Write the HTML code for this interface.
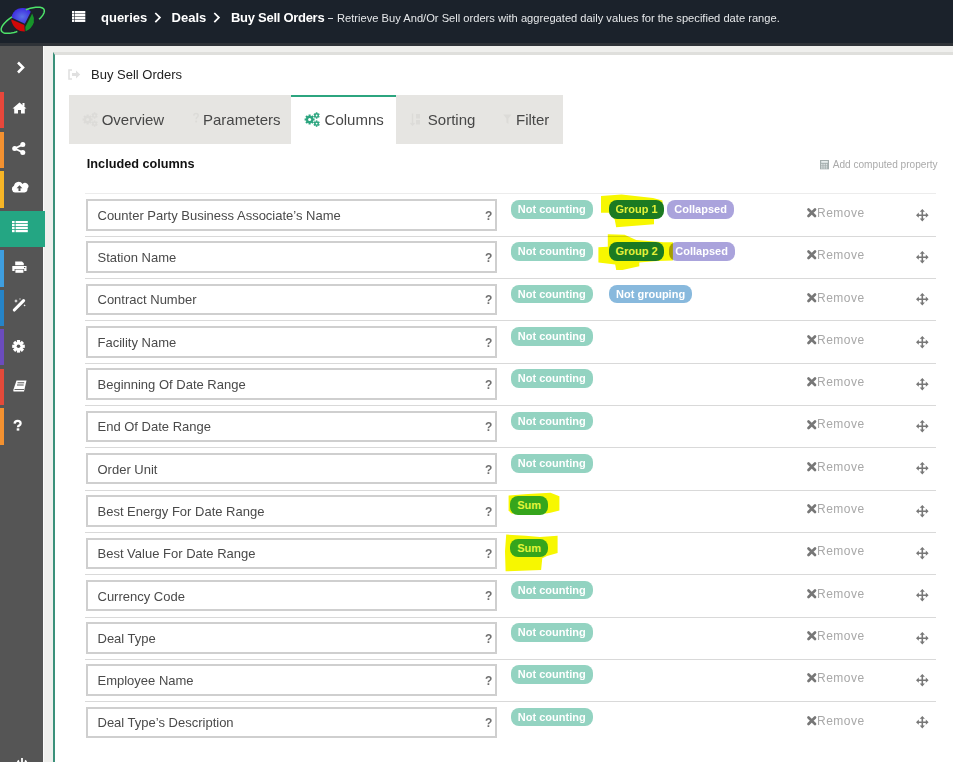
<!DOCTYPE html>
<html><head><meta charset="utf-8"><style>
html,body{margin:0;padding:0;}
body{width:953px;height:762px;overflow:hidden;position:relative;background:#efefed;font-family:"Liberation Sans", sans-serif;}
.t{position:absolute;white-space:pre;}
.r{position:absolute;}
svg{position:absolute;overflow:visible;}
</style></head><body>
<div class="r" style="left:0px;top:0px;width:953px;height:43px;background:#1b222b;"></div><div class="r" style="left:0px;top:43px;width:953px;height:3px;background:#2f3338;"></div><svg style="left:0px;top:0px" width="48" height="40" viewBox="0 0 48 40">
<defs><radialGradient id="gb" cx="0.55" cy="0.55" r="0.6"><stop offset="0" stop-color="#5b72e6"/><stop offset="1" stop-color="#3a22e0"/></radialGradient></defs>
<path d="M11.5,17.5 Q12.5,11.5 18,8.8 Q23,7 28,9 L30.8,11.8 L24.8,23.8 Z" fill="url(#gb)"/>
<path d="M11,19.2 L24.3,25 L24.8,31.6 Q20,31.8 16.5,29 Q12,25 11,19.2 Z" fill="#d00808"/>
<path d="M32.2,13.6 Q34.5,17.5 33.8,22.5 Q32,28.5 25.6,31.2 L25.3,27 Z" fill="#17952a"/>
<polyline points="17.35,31.54 15.72,32.03 14.13,32.44 12.59,32.78 11.12,33.04 9.72,33.22 8.40,33.32 7.18,33.34 6.05,33.28 5.02,33.14 4.10,32.91 3.30,32.61 2.62,32.23 2.07,31.77 1.64,31.24 1.35,30.65 1.19,29.99 1.17,29.27 1.28,28.49 1.52,27.66 1.90,26.78 2.40,25.87 3.04,24.92 3.79,23.94 4.67,22.93 5.66,21.91 6.75,20.88 7.94,19.85 9.23,18.82 10.60,17.80 12.05,16.79" fill="none" stroke="#4ee36a" stroke-width="1.5"/>
<polyline points="25.86,9.75 27.37,9.22 28.86,8.74 30.32,8.33 31.74,7.97 33.12,7.68 34.44,7.45 35.71,7.28 36.90,7.19 38.03,7.15 39.08,7.19 40.04,7.29 40.92,7.46 41.71,7.69 42.39,7.99 42.98,8.35 43.47,8.77 43.85,9.24 44.12,9.78 44.28,10.36 44.34,11.00 44.28,11.69 44.12,12.41 43.84,13.18 43.46,13.99 42.98,14.82 42.39,15.68 41.70,16.57 40.91,17.48 40.04,18.39 39.07,19.32" fill="none" stroke="#4ee36a" stroke-width="1.5"/>
</svg><svg style="left:72px;top:11px" width="14" height="12" viewBox="0 0 14 12"><rect x="0" y="0.00" width="2.4" height="2.4" fill="#fff"/><rect x="3" y="0.00" width="10.3" height="2.4" fill="#fff"/><rect x="0" y="2.85" width="2.4" height="2.4" fill="#fff"/><rect x="3" y="2.85" width="10.3" height="2.4" fill="#fff"/><rect x="0" y="5.70" width="2.4" height="2.4" fill="#fff"/><rect x="3" y="5.70" width="10.3" height="2.4" fill="#fff"/><rect x="0" y="8.55" width="2.4" height="2.4" fill="#fff"/><rect x="3" y="8.55" width="10.3" height="2.4" fill="#fff"/></svg><div class="t" style="left:101px;top:10.05px;font-size:13px;line-height:16.9px;color:#fff;font-weight:700;">queries</div><svg style="left:154.2px;top:11.6px" width="8" height="12" viewBox="0 0 8 12"><polyline points="1.3,1 5.9,5.6 1.3,10.2" fill="none" stroke="#fff" stroke-width="1.75"/></svg><div class="t" style="left:171.6px;top:10.05px;font-size:13px;line-height:16.9px;color:#fff;font-weight:700;">Deals</div><svg style="left:212.7px;top:11.6px" width="8" height="12" viewBox="0 0 8 12"><polyline points="1.3,1 5.9,5.6 1.3,10.2" fill="none" stroke="#fff" stroke-width="1.75"/></svg><div class="t" style="left:231px;top:10.05px;font-size:13px;line-height:16.9px;color:#fff;font-weight:700;letter-spacing:-0.28px;">Buy Sell Orders</div><div class="r" style="left:328.2px;top:18.4px;width:5.2px;height:1.1px;background:#d8dcdf;"></div><div class="t" style="left:337px;top:10.89px;font-size:11.15px;line-height:14.5px;color:#e6e8ea;font-weight:400;">Retrieve Buy And/Or Sell orders with aggregated daily values for the specified date range.</div><div class="r" style="left:0;top:46px;width:43px;height:716px;background:#555555"></div><div class="r" style="left:43px;top:46px;width:1px;height:716px;background:#fafafa"></div><div class="r" style="left:0;top:92px;width:4px;height:36.4px;background:#e8473b"></div><div class="r" style="left:0;top:131.6px;width:4px;height:36.4px;background:#f39130"></div><div class="r" style="left:0;top:171.2px;width:4px;height:36.4px;background:#f6b526"></div><div class="r" style="left:0;top:211px;width:45px;height:36px;background:#24a683"></div><div class="r" style="left:0;top:250.4px;width:4px;height:36.4px;background:#3e9ee0"></div><div class="r" style="left:0;top:290px;width:4px;height:36.4px;background:#2584c8"></div><div class="r" style="left:0;top:329px;width:4px;height:36.4px;background:#6b4cbd"></div><div class="r" style="left:0;top:368.7px;width:4px;height:36.4px;background:#e34a3a"></div><div class="r" style="left:0;top:408.2px;width:4px;height:36.4px;background:#f39130"></div><svg style="left:16px;top:61px" width="10" height="14" viewBox="0 0 10 14"><polyline points="2,1.5 7,6.5 2,11.5" fill="none" stroke="#fff" stroke-width="2.6"/></svg><svg style="left:12px;top:101px" width="15" height="13" viewBox="0 0 15 13"><path d="M7.5,1.5 L14.5,7.5 L12.8,7.5 L12.8,12.5 L9,12.5 L9,9 L6,9 L6,12.5 L2.2,12.5 L2.2,7.5 L0.5,7.5 Z" fill="#fff"/><rect x="10.5" y="2" width="2" height="3.5" fill="#fff"/></svg><svg style="left:12px;top:142px" width="14" height="13" viewBox="0 0 14 13"><circle cx="10.8" cy="2.6" r="2.5" fill="#fff"/><circle cx="2.7" cy="6.5" r="2.5" fill="#fff"/><circle cx="10.8" cy="10.4" r="2.5" fill="#fff"/><path d="M2.7,6.5 L10.8,2.6 M2.7,6.5 L10.8,10.4" stroke="#fff" stroke-width="1.8"/></svg><svg style="left:11px;top:180px" width="17" height="13" viewBox="0 0 17 13"><path d="M4,12.5 A3.5,3.5 0 0 1 3,5.8 A4.6,4.6 0 0 1 11.5,4 A3.3,3.3 0 0 1 16.5,8.6 A3.6,3.6 0 0 1 13.5,12.5 Z" fill="#fff"/><path d="M8.5,5.2 L5.6,8.2 L7.5,8.2 L7.5,11 L9.5,11 L9.5,8.2 L11.4,8.2 Z" fill="#555"/></svg><svg style="left:11.5px;top:220.5px" width="16" height="12" viewBox="0 0 16 12"><rect x="0" y="0" width="2.6" height="2.2" fill="#fff"/><rect x="3.6" y="0" width="12.2" height="2.2" fill="#fff"/><rect x="0" y="3" width="2.6" height="2.2" fill="#fff"/><rect x="3.6" y="3" width="12.2" height="2.2" fill="#fff"/><rect x="0" y="6" width="2.6" height="2.2" fill="#fff"/><rect x="3.6" y="6" width="12.2" height="2.2" fill="#fff"/><rect x="0" y="9" width="2.6" height="2.2" fill="#fff"/><rect x="3.6" y="9" width="12.2" height="2.2" fill="#fff"/></svg><svg style="left:12px;top:260.5px" width="15" height="12" viewBox="0 0 15 12"><path d="M3.2,0.5 L10,0.5 L11.8,2.3 L11.8,4.3 L3.2,4.3 Z" fill="#fff"/><path d="M0.3,5 L14.5,5 L14.5,10 L12.2,10 L12.2,8 L2.6,8 L2.6,10 L0.3,10 Z" fill="#fff"/><rect x="3.4" y="8.6" width="8" height="3.2" fill="#fff"/><rect x="12" y="6" width="1.3" height="1.1" fill="#555"/></svg><svg style="left:13px;top:298px" width="13" height="14" viewBox="0 0 13 14"><path d="M1.3,12 L10.6,2.7" stroke="#fff" stroke-width="3.1" stroke-linecap="round"/><path d="M3,1 L3.6,2.4 L5,3 L3.6,3.6 L3,5 L2.4,3.6 L1,3 L2.4,2.4Z M11.6,6.2 L12,7 L12.8,7.4 L12,7.8 L11.6,8.6 L11.2,7.8 L10.4,7.4 L11.2,7Z M7,0 L7.3,0.7 L8,1 L7.3,1.3 L7,2 L6.7,1.3 L6,1 L6.7,0.7Z" fill="#fff"/></svg><svg style="left:12.2px;top:339.5px" width="13" height="13" viewBox="0 0 13 13"><rect x="4.9" y="0.0" width="3.2" height="3" fill="#fff" transform="rotate(0 6.5 6.3)"/><rect x="4.9" y="0.0" width="3.2" height="3" fill="#fff" transform="rotate(45 6.5 6.3)"/><rect x="4.9" y="0.0" width="3.2" height="3" fill="#fff" transform="rotate(90 6.5 6.3)"/><rect x="4.9" y="0.0" width="3.2" height="3" fill="#fff" transform="rotate(135 6.5 6.3)"/><rect x="4.9" y="0.0" width="3.2" height="3" fill="#fff" transform="rotate(180 6.5 6.3)"/><rect x="4.9" y="0.0" width="3.2" height="3" fill="#fff" transform="rotate(225 6.5 6.3)"/><rect x="4.9" y="0.0" width="3.2" height="3" fill="#fff" transform="rotate(270 6.5 6.3)"/><rect x="4.9" y="0.0" width="3.2" height="3" fill="#fff" transform="rotate(315 6.5 6.3)"/><circle cx="6.5" cy="6.3" r="4.4" fill="#fff"/><circle cx="6.5" cy="6.3" r="1.8" fill="#555"/></svg><svg style="left:12.5px;top:379.5px" width="14" height="13" viewBox="0 0 14 13"><path d="M3.5,0.5 L13.5,0.5 L11,11.5 L1,11.5 Q0,11.5 0.3,10 Z" fill="#fff"/><path d="M4.5,2.8 L11.2,2.8 M4,5 L10.7,5" stroke="#555" stroke-width="1"/><path d="M1.5,9.5 L11,9.5" stroke="#555" stroke-width="0.9"/></svg><svg style="left:12.5px;top:419.8px" width="10" height="11" viewBox="0 0 10 11"><path d="M1.6,3.6 Q1.8,0.9 4.6,0.9 Q7.6,0.9 7.6,3.4 Q7.6,4.8 6,5.6 Q5,6.1 5,7.2" fill="none" stroke="#fff" stroke-width="2.3"/><rect x="3.7" y="8.3" width="2.6" height="2.3" fill="#fff"/></svg><svg style="left:16.2px;top:756.8px" width="12" height="12" viewBox="0 0 12 12"><path d="M3,3.5 A4.6,4.6 0 1 0 9,3.5" fill="none" stroke="#fff" stroke-width="1.8"/><path d="M6,1 L6,6" stroke="#fff" stroke-width="1.8"/></svg><div class="r" style="left:53px;top:52px;width:900px;height:710px;background:#fff;border-left:2px solid #3b917a;border-top:3px solid #dfdfdc;box-sizing:border-box;"></div><svg style="left:68px;top:69px" width="13" height="11" viewBox="0 0 13 11"><path d="M4,1 L1,1 L1,10 L4,10" fill="none" stroke="#e0e0e0" stroke-width="1.6"/><path d="M4,4 L8,4 L8,1.5 L12.2,5.5 L8,9.5 L8,7 L4,7 Z" fill="#e0e0e0"/></svg><div class="t" style="left:91px;top:67.05px;font-size:13px;line-height:16.9px;color:#222;font-weight:400;">Buy Sell Orders</div><div class="r" style="left:69px;top:95px;width:494px;height:48.5px;background:#e6e5e2"></div><div class="r" style="left:291px;top:95px;width:105px;height:48.5px;background:#fff;border-top:2px solid #2ca57f;box-sizing:border-box"></div><div class="t" style="left:101.7px;top:110.05px;font-size:15px;line-height:19.5px;color:#474747;font-weight:400;">Overview</div><div class="t" style="left:203px;top:110.05px;font-size:15px;line-height:19.5px;color:#474747;font-weight:400;">Parameters</div><div class="t" style="left:324.6px;top:110.05px;font-size:15px;line-height:19.5px;color:#474747;font-weight:400;">Columns</div><div class="t" style="left:427.8px;top:110.05px;font-size:15px;line-height:19.5px;color:#474747;font-weight:400;">Sorting</div><div class="t" style="left:516px;top:110.05px;font-size:15px;line-height:19.5px;color:#474747;font-weight:400;">Filter</div><svg style="left:82px;top:111.5px" width="16" height="15" viewBox="0 0 16 15"><rect x="4.55" y="2.5" width="2.1" height="1.9" fill="#dcdbd8" transform="rotate(0.0 5.6 7.5)"/><rect x="4.55" y="2.5" width="2.1" height="1.9" fill="#dcdbd8" transform="rotate(45.0 5.6 7.5)"/><rect x="4.55" y="2.5" width="2.1" height="1.9" fill="#dcdbd8" transform="rotate(90.0 5.6 7.5)"/><rect x="4.55" y="2.5" width="2.1" height="1.9" fill="#dcdbd8" transform="rotate(135.0 5.6 7.5)"/><rect x="4.55" y="2.5" width="2.1" height="1.9" fill="#dcdbd8" transform="rotate(180.0 5.6 7.5)"/><rect x="4.55" y="2.5" width="2.1" height="1.9" fill="#dcdbd8" transform="rotate(225.0 5.6 7.5)"/><rect x="4.55" y="2.5" width="2.1" height="1.9" fill="#dcdbd8" transform="rotate(270.0 5.6 7.5)"/><rect x="4.55" y="2.5" width="2.1" height="1.9" fill="#dcdbd8" transform="rotate(315.0 5.6 7.5)"/><circle cx="5.6" cy="7.5" r="3.7" fill="#dcdbd8"/><circle cx="5.6" cy="7.5" r="1.5" fill="#e6e5e2"/><rect x="11.799999999999999" y="0.30000000000000016" width="1.6" height="1.4" fill="#dcdbd8" transform="rotate(0.0 12.6 3.5)"/><rect x="11.799999999999999" y="0.30000000000000016" width="1.6" height="1.4" fill="#dcdbd8" transform="rotate(60.0 12.6 3.5)"/><rect x="11.799999999999999" y="0.30000000000000016" width="1.6" height="1.4" fill="#dcdbd8" transform="rotate(120.0 12.6 3.5)"/><rect x="11.799999999999999" y="0.30000000000000016" width="1.6" height="1.4" fill="#dcdbd8" transform="rotate(180.0 12.6 3.5)"/><rect x="11.799999999999999" y="0.30000000000000016" width="1.6" height="1.4" fill="#dcdbd8" transform="rotate(240.0 12.6 3.5)"/><rect x="11.799999999999999" y="0.30000000000000016" width="1.6" height="1.4" fill="#dcdbd8" transform="rotate(300.0 12.6 3.5)"/><circle cx="12.6" cy="3.5" r="2.4" fill="#dcdbd8"/><circle cx="12.6" cy="3.5" r="0.9" fill="#e6e5e2"/><rect x="11.799999999999999" y="8.399999999999999" width="1.6" height="1.4" fill="#dcdbd8" transform="rotate(0.0 12.6 11.6)"/><rect x="11.799999999999999" y="8.399999999999999" width="1.6" height="1.4" fill="#dcdbd8" transform="rotate(60.0 12.6 11.6)"/><rect x="11.799999999999999" y="8.399999999999999" width="1.6" height="1.4" fill="#dcdbd8" transform="rotate(120.0 12.6 11.6)"/><rect x="11.799999999999999" y="8.399999999999999" width="1.6" height="1.4" fill="#dcdbd8" transform="rotate(180.0 12.6 11.6)"/><rect x="11.799999999999999" y="8.399999999999999" width="1.6" height="1.4" fill="#dcdbd8" transform="rotate(240.0 12.6 11.6)"/><rect x="11.799999999999999" y="8.399999999999999" width="1.6" height="1.4" fill="#dcdbd8" transform="rotate(300.0 12.6 11.6)"/><circle cx="12.6" cy="11.6" r="2.4" fill="#dcdbd8"/><circle cx="12.6" cy="11.6" r="0.9" fill="#e6e5e2"/></svg><svg style="left:192.5px;top:113px" width="6" height="11" viewBox="0 0 6 11"><path d="M0.8,2.6 Q1,0.6 3,0.6 Q5.2,0.6 5.2,2.5 Q5.2,3.6 4,4.3 Q3.2,4.8 3.2,6.2" fill="none" stroke="#dcdbd8" stroke-width="1.5"/><rect x="2.3" y="7.6" width="1.8" height="1.8" fill="#dcdbd8"/></svg><svg style="left:304px;top:111.5px" width="16" height="15" viewBox="0 0 16 15"><rect x="4.55" y="2.5" width="2.1" height="1.9" fill="#2ca57f" transform="rotate(0.0 5.6 7.5)"/><rect x="4.55" y="2.5" width="2.1" height="1.9" fill="#2ca57f" transform="rotate(45.0 5.6 7.5)"/><rect x="4.55" y="2.5" width="2.1" height="1.9" fill="#2ca57f" transform="rotate(90.0 5.6 7.5)"/><rect x="4.55" y="2.5" width="2.1" height="1.9" fill="#2ca57f" transform="rotate(135.0 5.6 7.5)"/><rect x="4.55" y="2.5" width="2.1" height="1.9" fill="#2ca57f" transform="rotate(180.0 5.6 7.5)"/><rect x="4.55" y="2.5" width="2.1" height="1.9" fill="#2ca57f" transform="rotate(225.0 5.6 7.5)"/><rect x="4.55" y="2.5" width="2.1" height="1.9" fill="#2ca57f" transform="rotate(270.0 5.6 7.5)"/><rect x="4.55" y="2.5" width="2.1" height="1.9" fill="#2ca57f" transform="rotate(315.0 5.6 7.5)"/><circle cx="5.6" cy="7.5" r="3.7" fill="#2ca57f"/><circle cx="5.6" cy="7.5" r="1.5" fill="#fff"/><rect x="11.799999999999999" y="0.30000000000000016" width="1.6" height="1.4" fill="#2ca57f" transform="rotate(0.0 12.6 3.5)"/><rect x="11.799999999999999" y="0.30000000000000016" width="1.6" height="1.4" fill="#2ca57f" transform="rotate(60.0 12.6 3.5)"/><rect x="11.799999999999999" y="0.30000000000000016" width="1.6" height="1.4" fill="#2ca57f" transform="rotate(120.0 12.6 3.5)"/><rect x="11.799999999999999" y="0.30000000000000016" width="1.6" height="1.4" fill="#2ca57f" transform="rotate(180.0 12.6 3.5)"/><rect x="11.799999999999999" y="0.30000000000000016" width="1.6" height="1.4" fill="#2ca57f" transform="rotate(240.0 12.6 3.5)"/><rect x="11.799999999999999" y="0.30000000000000016" width="1.6" height="1.4" fill="#2ca57f" transform="rotate(300.0 12.6 3.5)"/><circle cx="12.6" cy="3.5" r="2.4" fill="#2ca57f"/><circle cx="12.6" cy="3.5" r="0.9" fill="#fff"/><rect x="11.799999999999999" y="8.399999999999999" width="1.6" height="1.4" fill="#2ca57f" transform="rotate(0.0 12.6 11.6)"/><rect x="11.799999999999999" y="8.399999999999999" width="1.6" height="1.4" fill="#2ca57f" transform="rotate(60.0 12.6 11.6)"/><rect x="11.799999999999999" y="8.399999999999999" width="1.6" height="1.4" fill="#2ca57f" transform="rotate(120.0 12.6 11.6)"/><rect x="11.799999999999999" y="8.399999999999999" width="1.6" height="1.4" fill="#2ca57f" transform="rotate(180.0 12.6 11.6)"/><rect x="11.799999999999999" y="8.399999999999999" width="1.6" height="1.4" fill="#2ca57f" transform="rotate(240.0 12.6 11.6)"/><rect x="11.799999999999999" y="8.399999999999999" width="1.6" height="1.4" fill="#2ca57f" transform="rotate(300.0 12.6 11.6)"/><circle cx="12.6" cy="11.6" r="2.4" fill="#2ca57f"/><circle cx="12.6" cy="11.6" r="0.9" fill="#fff"/></svg><svg style="left:410px;top:112.5px" width="11" height="13" viewBox="0 0 11 13"><path d="M2.5,0.5 L2.5,12 M0.5,10 L2.5,12 L4.5,10" fill="none" stroke="#dcdbd8" stroke-width="1.4"/><rect x="6" y="1" width="4" height="4.5" fill="#dcdbd8"/><rect x="6" y="7" width="4" height="4.5" fill="#dcdbd8"/></svg><svg style="left:502.5px;top:113.5px" width="9" height="11" viewBox="0 0 9 11"><path d="M0.3,0.5 L8.5,0.5 L5.4,4.5 L5.4,10 L3.4,8.5 L3.4,4.5 Z" fill="#dcdbd8"/></svg><div class="t" style="left:86.8px;top:156.34px;font-size:12.7px;line-height:16.51px;color:#111;font-weight:700;">Included columns</div><svg style="left:820px;top:160px" width="9" height="9.5" viewBox="0 0 9 9.5"><rect x="0" y="0" width="9" height="9.3" fill="#a3adad"/><rect x="1.2" y="1" width="6.6" height="1.8" fill="#e8eeee"/><rect x="1.1" y="3.8" width="1.5" height="1.1" fill="#e4eaea"/><rect x="3.4" y="3.8" width="1.5" height="1.1" fill="#e4eaea"/><rect x="5.699999999999999" y="3.8" width="1.5" height="1.1" fill="#e4eaea"/><rect x="1.1" y="5.6" width="1.5" height="1.1" fill="#e4eaea"/><rect x="3.4" y="5.6" width="1.5" height="1.1" fill="#e4eaea"/><rect x="5.699999999999999" y="5.6" width="1.5" height="1.1" fill="#e4eaea"/><rect x="1.1" y="7.4" width="1.5" height="1.1" fill="#e4eaea"/><rect x="3.4" y="7.4" width="1.5" height="1.1" fill="#e4eaea"/><rect x="5.699999999999999" y="7.4" width="1.5" height="1.1" fill="#e4eaea"/></svg><div class="t" style="left:832.7px;top:157.94px;font-size:10.1px;line-height:13.13px;color:#aaa;font-weight:400;">Add computed property</div><div class="r" style="left:85px;top:193px;width:850.5px;height:1px;background:#ececec;"></div><div class="r" style="left:86px;top:199.10px;width:411px;height:31.5px;border:2px solid #cfcfcf;box-sizing:border-box;background:#fff"></div><div class="t" style="left:97.5px;top:208.05px;font-size:13px;line-height:16.9px;color:#4a4a4a;font-weight:400;">Counter Party Business Associate’s Name</div><div class="t" style="left:485px;top:209.04px;font-size:12px;line-height:15.6px;color:#6f6f6f;font-weight:700;">?</div><div class="r" style="left:511px;top:200.10px;width:81.5px;height:18.7px;background:#93d3c1;border-radius:8px;color:#fff;font-weight:700;font-size:11px;line-height:18.7px;text-align:center;white-space:pre">Not counting</div><svg style="left:0;top:0" width="953" height="762"><polygon points="601,195.90 621.5,194.50 653,198.00 662.4,200.60 663,212.00 654,219.50 654,224.20 616.2,227.30 614.7,219.50 608.9,212.70 601,212.70" fill="#f7f700"/></svg><div class="r" style="left:609.3px;top:200.10px;width:54.6px;height:18.7px;background:#1b7a22;border-radius:8px;color:#e4f23a;font-weight:700;font-size:11px;line-height:18.7px;text-align:center;white-space:pre">Group 1</div><div class="r" style="left:667.2px;top:200.10px;width:66.8px;height:18.7px;background:#aaa3dc;border-radius:8px;color:#fff;font-weight:700;font-size:11px;line-height:18.7px;text-align:center;white-space:pre">Collapsed</div><svg style="left:807.4px;top:208.1px" width="9.5" height="9.5" viewBox="0 0 9.5 9.5"><path d="M1.5,1.5 L8,8 M8,1.5 L1.5,8" stroke="#777" stroke-width="2.7" stroke-linecap="round"/></svg><div class="t" style="left:817px;top:206.04px;font-size:12px;line-height:15.6px;color:#a8a8a8;font-weight:400;letter-spacing:0.5px;">Remove</div><svg style="left:915.6px;top:208.60000000000002px" width="12.6" height="12.4" viewBox="0 0 12.6 12.4"><path d="M6.3,2 L6.3,10.4 M2,6.2 L10.6,6.2" stroke="#777" stroke-width="1.6"/><path d="M6.3,0 L8.9,2.8 L3.7,2.8Z M6.3,12.4 L8.9,9.6 L3.7,9.6Z M0,6.2 L2.8,3.6 L2.8,8.8Z M12.6,6.2 L9.8,3.6 L9.8,8.8Z" fill="#777"/></svg><div class="r" style="left:85px;top:235.8px;width:850.5px;height:1px;background:#d9d9d9;"></div><div class="r" style="left:86px;top:241.40px;width:411px;height:31.5px;border:2px solid #cfcfcf;box-sizing:border-box;background:#fff"></div><div class="t" style="left:97.5px;top:250.05px;font-size:13px;line-height:16.9px;color:#4a4a4a;font-weight:400;">Station Name</div><div class="t" style="left:485px;top:251.04px;font-size:12px;line-height:15.6px;color:#6f6f6f;font-weight:700;">?</div><div class="r" style="left:511px;top:242.40px;width:81.5px;height:18.7px;background:#93d3c1;border-radius:8px;color:#fff;font-weight:700;font-size:11px;line-height:18.7px;text-align:center;white-space:pre">Not counting</div><div class="r" style="left:668.6px;top:242.40px;width:66.1px;height:18.7px;background:#aaa3dc;border-radius:8px;color:#fff;font-weight:700;font-size:11px;line-height:18.7px;text-align:center;white-space:pre">Collapsed</div><svg style="left:0;top:0;mix-blend-mode:multiply" width="953" height="762"><polygon points="607.8,234.20 624.6,234.70 636.2,240.00 663.5,242.30 672.9,242.30 672.9,260.60 657.2,261.00 639.3,262.50 639.3,266.20 622.5,269.90 616.2,269.90 615.2,264.60 598.4,262.50 598.4,247.30 607.8,246.80" fill="#f7f700"/></svg><div class="r" style="left:609.3px;top:242.40px;width:54.6px;height:18.7px;background:#1b7a22;border-radius:8px;color:#e4f23a;font-weight:700;font-size:11px;line-height:18.7px;text-align:center;white-space:pre">Group 2</div><svg style="left:807.4px;top:250.4px" width="9.5" height="9.5" viewBox="0 0 9.5 9.5"><path d="M1.5,1.5 L8,8 M8,1.5 L1.5,8" stroke="#777" stroke-width="2.7" stroke-linecap="round"/></svg><div class="t" style="left:817px;top:248.04px;font-size:12px;line-height:15.6px;color:#a8a8a8;font-weight:400;letter-spacing:0.5px;">Remove</div><svg style="left:915.6px;top:250.90000000000003px" width="12.6" height="12.4" viewBox="0 0 12.6 12.4"><path d="M6.3,2 L6.3,10.4 M2,6.2 L10.6,6.2" stroke="#777" stroke-width="1.6"/><path d="M6.3,0 L8.9,2.8 L3.7,2.8Z M6.3,12.4 L8.9,9.6 L3.7,9.6Z M0,6.2 L2.8,3.6 L2.8,8.8Z M12.6,6.2 L9.8,3.6 L9.8,8.8Z" fill="#777"/></svg><div class="r" style="left:85px;top:278.1px;width:850.5px;height:1px;background:#d9d9d9;"></div><div class="r" style="left:86px;top:283.70px;width:411px;height:31.5px;border:2px solid #cfcfcf;box-sizing:border-box;background:#fff"></div><div class="t" style="left:97.5px;top:292.05px;font-size:13px;line-height:16.9px;color:#4a4a4a;font-weight:400;">Contract Number</div><div class="t" style="left:485px;top:293.04px;font-size:12px;line-height:15.6px;color:#6f6f6f;font-weight:700;">?</div><div class="r" style="left:511px;top:284.70px;width:81.5px;height:18.7px;background:#93d3c1;border-radius:8px;color:#fff;font-weight:700;font-size:11px;line-height:18.7px;text-align:center;white-space:pre">Not counting</div><div class="r" style="left:609.1px;top:284.70px;width:83px;height:18.7px;background:#88b9dd;border-radius:8px;color:#fff;font-weight:700;font-size:11px;line-height:18.7px;text-align:center;white-space:pre">Not grouping</div><svg style="left:807.4px;top:292.7px" width="9.5" height="9.5" viewBox="0 0 9.5 9.5"><path d="M1.5,1.5 L8,8 M8,1.5 L1.5,8" stroke="#777" stroke-width="2.7" stroke-linecap="round"/></svg><div class="t" style="left:817px;top:291.04px;font-size:12px;line-height:15.6px;color:#a8a8a8;font-weight:400;letter-spacing:0.5px;">Remove</div><svg style="left:915.6px;top:293.20000000000005px" width="12.6" height="12.4" viewBox="0 0 12.6 12.4"><path d="M6.3,2 L6.3,10.4 M2,6.2 L10.6,6.2" stroke="#777" stroke-width="1.6"/><path d="M6.3,0 L8.9,2.8 L3.7,2.8Z M6.3,12.4 L8.9,9.6 L3.7,9.6Z M0,6.2 L2.8,3.6 L2.8,8.8Z M12.6,6.2 L9.8,3.6 L9.8,8.8Z" fill="#777"/></svg><div class="r" style="left:85px;top:320.4px;width:850.5px;height:1px;background:#d9d9d9;"></div><div class="r" style="left:86px;top:326.00px;width:411px;height:31.5px;border:2px solid #cfcfcf;box-sizing:border-box;background:#fff"></div><div class="t" style="left:97.5px;top:335.05px;font-size:13px;line-height:16.9px;color:#4a4a4a;font-weight:400;">Facility Name</div><div class="t" style="left:485px;top:336.04px;font-size:12px;line-height:15.6px;color:#6f6f6f;font-weight:700;">?</div><div class="r" style="left:511px;top:327.00px;width:81.5px;height:18.7px;background:#93d3c1;border-radius:8px;color:#fff;font-weight:700;font-size:11px;line-height:18.7px;text-align:center;white-space:pre">Not counting</div><svg style="left:807.4px;top:334.99999999999994px" width="9.5" height="9.5" viewBox="0 0 9.5 9.5"><path d="M1.5,1.5 L8,8 M8,1.5 L1.5,8" stroke="#777" stroke-width="2.7" stroke-linecap="round"/></svg><div class="t" style="left:817px;top:333.04px;font-size:12px;line-height:15.6px;color:#a8a8a8;font-weight:400;letter-spacing:0.5px;">Remove</div><svg style="left:915.6px;top:335.5px" width="12.6" height="12.4" viewBox="0 0 12.6 12.4"><path d="M6.3,2 L6.3,10.4 M2,6.2 L10.6,6.2" stroke="#777" stroke-width="1.6"/><path d="M6.3,0 L8.9,2.8 L3.7,2.8Z M6.3,12.4 L8.9,9.6 L3.7,9.6Z M0,6.2 L2.8,3.6 L2.8,8.8Z M12.6,6.2 L9.8,3.6 L9.8,8.8Z" fill="#777"/></svg><div class="r" style="left:85px;top:362.7px;width:850.5px;height:1px;background:#d9d9d9;"></div><div class="r" style="left:86px;top:368.30px;width:411px;height:31.5px;border:2px solid #cfcfcf;box-sizing:border-box;background:#fff"></div><div class="t" style="left:97.5px;top:377.05px;font-size:13px;line-height:16.9px;color:#4a4a4a;font-weight:400;">Beginning Of Date Range</div><div class="t" style="left:485px;top:378.04px;font-size:12px;line-height:15.6px;color:#6f6f6f;font-weight:700;">?</div><div class="r" style="left:511px;top:369.30px;width:81.5px;height:18.7px;background:#93d3c1;border-radius:8px;color:#fff;font-weight:700;font-size:11px;line-height:18.7px;text-align:center;white-space:pre">Not counting</div><svg style="left:807.4px;top:377.29999999999995px" width="9.5" height="9.5" viewBox="0 0 9.5 9.5"><path d="M1.5,1.5 L8,8 M8,1.5 L1.5,8" stroke="#777" stroke-width="2.7" stroke-linecap="round"/></svg><div class="t" style="left:817px;top:375.04px;font-size:12px;line-height:15.6px;color:#a8a8a8;font-weight:400;letter-spacing:0.5px;">Remove</div><svg style="left:915.6px;top:377.8px" width="12.6" height="12.4" viewBox="0 0 12.6 12.4"><path d="M6.3,2 L6.3,10.4 M2,6.2 L10.6,6.2" stroke="#777" stroke-width="1.6"/><path d="M6.3,0 L8.9,2.8 L3.7,2.8Z M6.3,12.4 L8.9,9.6 L3.7,9.6Z M0,6.2 L2.8,3.6 L2.8,8.8Z M12.6,6.2 L9.8,3.6 L9.8,8.8Z" fill="#777"/></svg><div class="r" style="left:85px;top:405.0px;width:850.5px;height:1px;background:#d9d9d9;"></div><div class="r" style="left:86px;top:410.60px;width:411px;height:31.5px;border:2px solid #cfcfcf;box-sizing:border-box;background:#fff"></div><div class="t" style="left:97.5px;top:419.05px;font-size:13px;line-height:16.9px;color:#4a4a4a;font-weight:400;">End Of Date Range</div><div class="t" style="left:485px;top:420.04px;font-size:12px;line-height:15.6px;color:#6f6f6f;font-weight:700;">?</div><div class="r" style="left:511px;top:411.60px;width:81.5px;height:18.7px;background:#93d3c1;border-radius:8px;color:#fff;font-weight:700;font-size:11px;line-height:18.7px;text-align:center;white-space:pre">Not counting</div><svg style="left:807.4px;top:419.59999999999997px" width="9.5" height="9.5" viewBox="0 0 9.5 9.5"><path d="M1.5,1.5 L8,8 M8,1.5 L1.5,8" stroke="#777" stroke-width="2.7" stroke-linecap="round"/></svg><div class="t" style="left:817px;top:417.04px;font-size:12px;line-height:15.6px;color:#a8a8a8;font-weight:400;letter-spacing:0.5px;">Remove</div><svg style="left:915.6px;top:420.1px" width="12.6" height="12.4" viewBox="0 0 12.6 12.4"><path d="M6.3,2 L6.3,10.4 M2,6.2 L10.6,6.2" stroke="#777" stroke-width="1.6"/><path d="M6.3,0 L8.9,2.8 L3.7,2.8Z M6.3,12.4 L8.9,9.6 L3.7,9.6Z M0,6.2 L2.8,3.6 L2.8,8.8Z M12.6,6.2 L9.8,3.6 L9.8,8.8Z" fill="#777"/></svg><div class="r" style="left:85px;top:447.3px;width:850.5px;height:1px;background:#d9d9d9;"></div><div class="r" style="left:86px;top:452.90px;width:411px;height:31.5px;border:2px solid #cfcfcf;box-sizing:border-box;background:#fff"></div><div class="t" style="left:97.5px;top:462.05px;font-size:13px;line-height:16.9px;color:#4a4a4a;font-weight:400;">Order Unit</div><div class="t" style="left:485px;top:463.04px;font-size:12px;line-height:15.6px;color:#6f6f6f;font-weight:700;">?</div><div class="r" style="left:511px;top:453.90px;width:81.5px;height:18.7px;background:#93d3c1;border-radius:8px;color:#fff;font-weight:700;font-size:11px;line-height:18.7px;text-align:center;white-space:pre">Not counting</div><svg style="left:807.4px;top:461.8999999999999px" width="9.5" height="9.5" viewBox="0 0 9.5 9.5"><path d="M1.5,1.5 L8,8 M8,1.5 L1.5,8" stroke="#777" stroke-width="2.7" stroke-linecap="round"/></svg><div class="t" style="left:817px;top:460.04px;font-size:12px;line-height:15.6px;color:#a8a8a8;font-weight:400;letter-spacing:0.5px;">Remove</div><svg style="left:915.6px;top:462.4px" width="12.6" height="12.4" viewBox="0 0 12.6 12.4"><path d="M6.3,2 L6.3,10.4 M2,6.2 L10.6,6.2" stroke="#777" stroke-width="1.6"/><path d="M6.3,0 L8.9,2.8 L3.7,2.8Z M6.3,12.4 L8.9,9.6 L3.7,9.6Z M0,6.2 L2.8,3.6 L2.8,8.8Z M12.6,6.2 L9.8,3.6 L9.8,8.8Z" fill="#777"/></svg><div class="r" style="left:85px;top:489.6px;width:850.5px;height:1px;background:#d9d9d9;"></div><div class="r" style="left:86px;top:495.20px;width:411px;height:31.5px;border:2px solid #cfcfcf;box-sizing:border-box;background:#fff"></div><div class="t" style="left:97.5px;top:504.05px;font-size:13px;line-height:16.9px;color:#4a4a4a;font-weight:400;">Best Energy For Date Range</div><div class="t" style="left:485px;top:505.04px;font-size:12px;line-height:15.6px;color:#6f6f6f;font-weight:700;">?</div><svg style="left:0;top:0" width="953" height="762"><polygon points="508.6,495.60 528,493.90 550.5,492.70 559.4,496.20 559.4,510.40 550.5,512.80 545.8,513.60 511.5,513.60 508.6,510.40" fill="#f7f700"/></svg><div class="r" style="left:510.4px;top:496.20px;width:37.6px;height:18.7px;background:#35a51c;border-radius:8px;color:#e2f53a;font-weight:700;font-size:11px;line-height:18.7px;text-align:center;white-space:pre">Sum</div><svg style="left:807.4px;top:504.19999999999993px" width="9.5" height="9.5" viewBox="0 0 9.5 9.5"><path d="M1.5,1.5 L8,8 M8,1.5 L1.5,8" stroke="#777" stroke-width="2.7" stroke-linecap="round"/></svg><div class="t" style="left:817px;top:502.04px;font-size:12px;line-height:15.6px;color:#a8a8a8;font-weight:400;letter-spacing:0.5px;">Remove</div><svg style="left:915.6px;top:504.7px" width="12.6" height="12.4" viewBox="0 0 12.6 12.4"><path d="M6.3,2 L6.3,10.4 M2,6.2 L10.6,6.2" stroke="#777" stroke-width="1.6"/><path d="M6.3,0 L8.9,2.8 L3.7,2.8Z M6.3,12.4 L8.9,9.6 L3.7,9.6Z M0,6.2 L2.8,3.6 L2.8,8.8Z M12.6,6.2 L9.8,3.6 L9.8,8.8Z" fill="#777"/></svg><div class="r" style="left:85px;top:531.9px;width:850.5px;height:1px;background:#d9d9d9;"></div><div class="r" style="left:86px;top:537.50px;width:411px;height:31.5px;border:2px solid #cfcfcf;box-sizing:border-box;background:#fff"></div><div class="t" style="left:97.5px;top:546.05px;font-size:13px;line-height:16.9px;color:#4a4a4a;font-weight:400;">Best Value For Date Range</div><div class="t" style="left:485px;top:547.04px;font-size:12px;line-height:15.6px;color:#6f6f6f;font-weight:700;">?</div><svg style="left:0;top:0" width="953" height="762"><polygon points="506.2,534.60 525.7,535.80 539.9,537.00 557.6,535.80 557.6,553.00 547,556.00 542.3,558.30 541.1,570.10 505.6,571.30 505,551.20" fill="#f7f700"/></svg><div class="r" style="left:510.4px;top:538.50px;width:37.6px;height:18.7px;background:#35a51c;border-radius:8px;color:#e2f53a;font-weight:700;font-size:11px;line-height:18.7px;text-align:center;white-space:pre">Sum</div><svg style="left:807.4px;top:546.5px" width="9.5" height="9.5" viewBox="0 0 9.5 9.5"><path d="M1.5,1.5 L8,8 M8,1.5 L1.5,8" stroke="#777" stroke-width="2.7" stroke-linecap="round"/></svg><div class="t" style="left:817px;top:544.04px;font-size:12px;line-height:15.6px;color:#a8a8a8;font-weight:400;letter-spacing:0.5px;">Remove</div><svg style="left:915.6px;top:546.9999999999999px" width="12.6" height="12.4" viewBox="0 0 12.6 12.4"><path d="M6.3,2 L6.3,10.4 M2,6.2 L10.6,6.2" stroke="#777" stroke-width="1.6"/><path d="M6.3,0 L8.9,2.8 L3.7,2.8Z M6.3,12.4 L8.9,9.6 L3.7,9.6Z M0,6.2 L2.8,3.6 L2.8,8.8Z M12.6,6.2 L9.8,3.6 L9.8,8.8Z" fill="#777"/></svg><div class="r" style="left:85px;top:574.2px;width:850.5px;height:1px;background:#d9d9d9;"></div><div class="r" style="left:86px;top:579.80px;width:411px;height:31.5px;border:2px solid #cfcfcf;box-sizing:border-box;background:#fff"></div><div class="t" style="left:97.5px;top:589.05px;font-size:13px;line-height:16.9px;color:#4a4a4a;font-weight:400;">Currency Code</div><div class="t" style="left:485px;top:589.04px;font-size:12px;line-height:15.6px;color:#6f6f6f;font-weight:700;">?</div><div class="r" style="left:511px;top:580.80px;width:81.5px;height:18.7px;background:#93d3c1;border-radius:8px;color:#fff;font-weight:700;font-size:11px;line-height:18.7px;text-align:center;white-space:pre">Not counting</div><svg style="left:807.4px;top:588.8000000000001px" width="9.5" height="9.5" viewBox="0 0 9.5 9.5"><path d="M1.5,1.5 L8,8 M8,1.5 L1.5,8" stroke="#777" stroke-width="2.7" stroke-linecap="round"/></svg><div class="t" style="left:817px;top:587.04px;font-size:12px;line-height:15.6px;color:#a8a8a8;font-weight:400;letter-spacing:0.5px;">Remove</div><svg style="left:915.6px;top:589.3px" width="12.6" height="12.4" viewBox="0 0 12.6 12.4"><path d="M6.3,2 L6.3,10.4 M2,6.2 L10.6,6.2" stroke="#777" stroke-width="1.6"/><path d="M6.3,0 L8.9,2.8 L3.7,2.8Z M6.3,12.4 L8.9,9.6 L3.7,9.6Z M0,6.2 L2.8,3.6 L2.8,8.8Z M12.6,6.2 L9.8,3.6 L9.8,8.8Z" fill="#777"/></svg><div class="r" style="left:85px;top:616.5px;width:850.5px;height:1px;background:#d9d9d9;"></div><div class="r" style="left:86px;top:622.10px;width:411px;height:31.5px;border:2px solid #cfcfcf;box-sizing:border-box;background:#fff"></div><div class="t" style="left:97.5px;top:631.05px;font-size:13px;line-height:16.9px;color:#4a4a4a;font-weight:400;">Deal Type</div><div class="t" style="left:485px;top:632.04px;font-size:12px;line-height:15.6px;color:#6f6f6f;font-weight:700;">?</div><div class="r" style="left:511px;top:623.10px;width:81.5px;height:18.7px;background:#93d3c1;border-radius:8px;color:#fff;font-weight:700;font-size:11px;line-height:18.7px;text-align:center;white-space:pre">Not counting</div><svg style="left:807.4px;top:631.1px" width="9.5" height="9.5" viewBox="0 0 9.5 9.5"><path d="M1.5,1.5 L8,8 M8,1.5 L1.5,8" stroke="#777" stroke-width="2.7" stroke-linecap="round"/></svg><div class="t" style="left:817px;top:629.04px;font-size:12px;line-height:15.6px;color:#a8a8a8;font-weight:400;letter-spacing:0.5px;">Remove</div><svg style="left:915.6px;top:631.5999999999999px" width="12.6" height="12.4" viewBox="0 0 12.6 12.4"><path d="M6.3,2 L6.3,10.4 M2,6.2 L10.6,6.2" stroke="#777" stroke-width="1.6"/><path d="M6.3,0 L8.9,2.8 L3.7,2.8Z M6.3,12.4 L8.9,9.6 L3.7,9.6Z M0,6.2 L2.8,3.6 L2.8,8.8Z M12.6,6.2 L9.8,3.6 L9.8,8.8Z" fill="#777"/></svg><div class="r" style="left:85px;top:658.8px;width:850.5px;height:1px;background:#d9d9d9;"></div><div class="r" style="left:86px;top:664.40px;width:411px;height:31.5px;border:2px solid #cfcfcf;box-sizing:border-box;background:#fff"></div><div class="t" style="left:97.5px;top:673.05px;font-size:13px;line-height:16.9px;color:#4a4a4a;font-weight:400;">Employee Name</div><div class="t" style="left:485px;top:674.04px;font-size:12px;line-height:15.6px;color:#6f6f6f;font-weight:700;">?</div><div class="r" style="left:511px;top:665.40px;width:81.5px;height:18.7px;background:#93d3c1;border-radius:8px;color:#fff;font-weight:700;font-size:11px;line-height:18.7px;text-align:center;white-space:pre">Not counting</div><svg style="left:807.4px;top:673.4px" width="9.5" height="9.5" viewBox="0 0 9.5 9.5"><path d="M1.5,1.5 L8,8 M8,1.5 L1.5,8" stroke="#777" stroke-width="2.7" stroke-linecap="round"/></svg><div class="t" style="left:817px;top:671.04px;font-size:12px;line-height:15.6px;color:#a8a8a8;font-weight:400;letter-spacing:0.5px;">Remove</div><svg style="left:915.6px;top:673.8999999999999px" width="12.6" height="12.4" viewBox="0 0 12.6 12.4"><path d="M6.3,2 L6.3,10.4 M2,6.2 L10.6,6.2" stroke="#777" stroke-width="1.6"/><path d="M6.3,0 L8.9,2.8 L3.7,2.8Z M6.3,12.4 L8.9,9.6 L3.7,9.6Z M0,6.2 L2.8,3.6 L2.8,8.8Z M12.6,6.2 L9.8,3.6 L9.8,8.8Z" fill="#777"/></svg><div class="r" style="left:85px;top:701.1px;width:850.5px;height:1px;background:#d9d9d9;"></div><div class="r" style="left:86px;top:706.70px;width:411px;height:31.5px;border:2px solid #cfcfcf;box-sizing:border-box;background:#fff"></div><div class="t" style="left:97.5px;top:715.05px;font-size:13px;line-height:16.9px;color:#4a4a4a;font-weight:400;">Deal Type’s Description</div><div class="t" style="left:485px;top:716.04px;font-size:12px;line-height:15.6px;color:#6f6f6f;font-weight:700;">?</div><div class="r" style="left:511px;top:707.70px;width:81.5px;height:18.7px;background:#93d3c1;border-radius:8px;color:#fff;font-weight:700;font-size:11px;line-height:18.7px;text-align:center;white-space:pre">Not counting</div><svg style="left:807.4px;top:715.6999999999999px" width="9.5" height="9.5" viewBox="0 0 9.5 9.5"><path d="M1.5,1.5 L8,8 M8,1.5 L1.5,8" stroke="#777" stroke-width="2.7" stroke-linecap="round"/></svg><div class="t" style="left:817px;top:714.04px;font-size:12px;line-height:15.6px;color:#a8a8a8;font-weight:400;letter-spacing:0.5px;">Remove</div><svg style="left:915.6px;top:716.1999999999998px" width="12.6" height="12.4" viewBox="0 0 12.6 12.4"><path d="M6.3,2 L6.3,10.4 M2,6.2 L10.6,6.2" stroke="#777" stroke-width="1.6"/><path d="M6.3,0 L8.9,2.8 L3.7,2.8Z M6.3,12.4 L8.9,9.6 L3.7,9.6Z M0,6.2 L2.8,3.6 L2.8,8.8Z M12.6,6.2 L9.8,3.6 L9.8,8.8Z" fill="#777"/></svg>
</body></html>
